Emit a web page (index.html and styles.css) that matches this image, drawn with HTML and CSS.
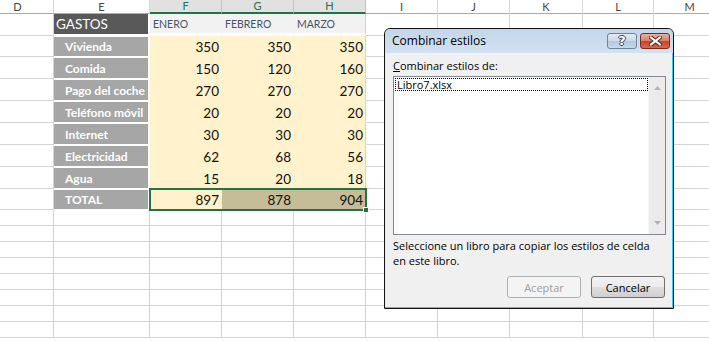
FILE: index.html
```html
<!DOCTYPE html>
<html lang="es">
<head>
<meta charset="utf-8">
<title>Combinar estilos</title>
<link rel="stylesheet" href="styles.css">
</head>
<body>
<div class="sheet">
  <div class="h">D</div><div class="h">E</div><div class="h sel">F</div><div class="h sel">G</div><div class="h sel">H</div><div class="h">I</div><div class="h">J</div><div class="h">K</div><div class="h">L</div><div class="h">M</div>

  <div class="c"></div><div class="c gastos">GASTOS</div><div class="c mon">ENERO</div><div class="c mon">FEBRERO</div><div class="c mon end">MARZO</div><div class="c"></div><div class="c"></div><div class="c"></div><div class="c"></div><div class="c"></div>

  <div class="c"></div><div class="c lbl">Vivienda</div><div class="c y">350</div><div class="c y">350</div><div class="c y end">350</div><div class="c"></div><div class="c"></div><div class="c"></div><div class="c"></div><div class="c"></div>
  <div class="c"></div><div class="c lbl">Comida</div><div class="c y">150</div><div class="c y">120</div><div class="c y end">160</div><div class="c"></div><div class="c"></div><div class="c"></div><div class="c"></div><div class="c"></div>
  <div class="c"></div><div class="c lbl">Pago del coche</div><div class="c y">270</div><div class="c y">270</div><div class="c y end">270</div><div class="c"></div><div class="c"></div><div class="c"></div><div class="c"></div><div class="c"></div>
  <div class="c"></div><div class="c lbl">Teléfono móvil</div><div class="c y">20</div><div class="c y">20</div><div class="c y end">20</div><div class="c"></div><div class="c"></div><div class="c"></div><div class="c"></div><div class="c"></div>
  <div class="c"></div><div class="c lbl">Internet</div><div class="c y">30</div><div class="c y">30</div><div class="c y end">30</div><div class="c"></div><div class="c"></div><div class="c"></div><div class="c"></div><div class="c"></div>
  <div class="c"></div><div class="c lbl">Electricidad</div><div class="c y">62</div><div class="c y">68</div><div class="c y end">56</div><div class="c"></div><div class="c"></div><div class="c"></div><div class="c"></div><div class="c"></div>
  <div class="c"></div><div class="c lbl">Agua</div><div class="c y">15</div><div class="c y">20</div><div class="c y end">18</div><div class="c"></div><div class="c"></div><div class="c"></div><div class="c"></div><div class="c"></div>
  <div class="c"></div><div class="c lbl">TOTAL</div><div class="c y tot-f">897</div><div class="c y tan tot-g">878</div><div class="c y tan end tot-h">904</div><div class="c"></div><div class="c"></div><div class="c"></div><div class="c"></div><div class="c"></div>

  <div class="c"></div><div class="c"></div><div class="c"></div><div class="c"></div><div class="c"></div><div class="c"></div><div class="c"></div><div class="c"></div><div class="c"></div><div class="c"></div>
  <div class="c"></div><div class="c"></div><div class="c"></div><div class="c"></div><div class="c"></div><div class="c"></div><div class="c"></div><div class="c"></div><div class="c"></div><div class="c"></div>
  <div class="c"></div><div class="c"></div><div class="c"></div><div class="c"></div><div class="c"></div><div class="c"></div><div class="c"></div><div class="c"></div><div class="c"></div><div class="c"></div>
  <div class="c"></div><div class="c"></div><div class="c"></div><div class="c"></div><div class="c"></div><div class="c"></div><div class="c"></div><div class="c"></div><div class="c"></div><div class="c"></div>
  <div class="c"></div><div class="c"></div><div class="c"></div><div class="c"></div><div class="c"></div><div class="c"></div><div class="c"></div><div class="c"></div><div class="c"></div><div class="c"></div>
  <div class="c"></div><div class="c"></div><div class="c"></div><div class="c"></div><div class="c"></div><div class="c"></div><div class="c"></div><div class="c"></div><div class="c"></div><div class="c"></div>
  <div class="c"></div><div class="c"></div><div class="c"></div><div class="c"></div><div class="c"></div><div class="c"></div><div class="c"></div><div class="c"></div><div class="c"></div><div class="c"></div>
  <div class="c"></div><div class="c"></div><div class="c"></div><div class="c"></div><div class="c"></div><div class="c"></div><div class="c"></div><div class="c"></div><div class="c"></div><div class="c"></div>

  <div class="selbox"><span class="handle"></span></div>
</div>

<div class="dlg">
  <div class="tbar">
    <span class="title">Combinar estilos</span>
    <div class="tbtns">
      <div class="tb help">?</div>
      <div class="tb close">
        <svg width="13" height="10" viewBox="0 0 13 10"><path d="M2 1.5 L11 8.5 M11 1.5 L2 8.5" stroke="#5a1e14" stroke-width="4" stroke-linecap="square"/><path d="M2 1.5 L11 8.5 M11 1.5 L2 8.5" stroke="#fff" stroke-width="2.2" stroke-linecap="square"/></svg>
      </div>
    </div>
  </div>
  <div class="dbody">
    <div class="lab"><u>C</u>ombinar estilos de:</div>
    <div class="list">
      <div class="items"><div class="item">Libro7.xlsx</div></div>
      <div class="sbar">
        <svg width="7" height="4" viewBox="0 0 7 4"><path d="M0 4 L3.5 0 L7 4Z" fill="#b4b4b4"/></svg>
        <svg width="7" height="4" viewBox="0 0 7 4"><path d="M0 0 L3.5 4 L7 0Z" fill="#b4b4b4"/></svg>
      </div>
    </div>
    <p class="desc">Seleccione un libro para copiar los estilos de celda<br>en este libro.</p>
    <div class="btns">
      <button class="btn" disabled>Aceptar</button>
      <button class="btn">Cancelar</button>
    </div>
  </div>
</div>
</body>
</html>
```

FILE: styles.css
```css
* { box-sizing: border-box; }
html, body { margin: 0; padding: 0; background: #fff; overflow: hidden; }
body { width: 709px; height: 341px; position: relative; font-family: Lato, "Liberation Sans", sans-serif; }

.sheet {
  display: grid;
  margin-left: -18px;
  width: 744px;
  grid-template-columns: 72px 96px 72px 72px 72px 72px 72px 73px 71px 72px;
  grid-template-rows: 14px 22px 21px 22px 22px 22px 22px 22px 22px 21px repeat(8, 16px);
}

.c {
  border-right: 1px solid #d4d4d4;
  border-bottom: 1px solid #d4d4d4;
  white-space: nowrap;
  overflow: hidden;
  display: flex;
  align-items: center;
  min-width: 0;
}

.h {
  border-right: 1px solid #d8d8d8;
  border-bottom: 1px solid #ababab;
  background: #fff;
  color: #444;
  font-size: 11px;
  line-height: 12px;
  display: flex;
  align-items: center;
  justify-content: center;
}
.h.sel {
  background: #e1e1e1;
  color: #217346;
  border-right-color: #c2c2c2;
  border-bottom: 2px solid #217346;
}

.gastos {
  background: #595959;
  color: #fff;
  font-size: 13.5px;
  padding-left: 2px;
  border-right: 2px solid #fff;
  border-bottom: 2px solid #fff;
}

.mon {
  background: #f2f2f2;
  color: #44546a;
  font-size: 10.5px;
  padding-left: 3px;
  border-right-color: #f2f2f2;
  border-bottom: 3px solid #fff;
}
.mon.end { border-right-color: #d4d4d4; }

.lbl {
  background: #a6a6a6;
  color: #fff;
  font-weight: 700;
  font-size: 12px;
  padding-left: 11px;
  border-top: 1px solid #fff;
  border-right: 2px solid #fff;
  border-bottom: 1px solid #fff;
}

.y {
  background: #fff2cc;
  border-right-color: #fff2cc;
  border-bottom-color: #fff2cc;
  justify-content: flex-end;
  align-items: flex-end;
  padding-right: 2px;
  padding-bottom: 2px;
  font-size: 13.5px;
  line-height: 14px;
  color: #111;
}
.y.end { border-right-color: #d4d4d4; }
.y.tan { background: #c4bd97; border-right-color: #c4bd97; }
.y.tan.end { border-right-color: #d4d4d4; }

.tot-f { grid-row: 10; grid-column: 3; }
.tot-g { grid-row: 10; grid-column: 4; }
.tot-h { grid-row: 10; grid-column: 5; }

.selbox {
  grid-column: 3 / 6;
  grid-row: 10;
  margin: -1px;
  border: 2px solid #217346;
  position: relative;
  z-index: 2;
}
.handle {
  position: absolute;
  right: -4px;
  bottom: -4px;
  width: 6px;
  height: 6px;
  background: #217346;
  border: 1px solid #fff;
}

/* Dialog */
.dlg {
  position: absolute;
  left: 384px;
  top: 28px;
  width: 290px;
  height: 281px;
  border: 1px solid #141414;
  border-radius: 6px 6px 0 0;
  background: #f0f0f0;
  display: flex;
  flex-direction: column;
  font-family: "Open Sans", "Noto Sans", sans-serif;
  font-size: 11px;
  color: #000;
  box-shadow: inset -1px -1px 0 #3cc6f2, inset 1px 0 0 #e3eaf4;
  overflow: hidden;
  z-index: 5;
}
.tbar {
  height: 24px;
  flex: none;
  display: flex;
  justify-content: space-between;
  align-items: flex-start;
  padding: 0 3px 0 7px;
  background: linear-gradient(#c3d5ea, #d3e2f2);
  border-radius: 5px 5px 0 0;
}
.title {
  font-size: 12px;
  line-height: 24px;
  color: #000;
}
.tbtns {
  display: flex;
  gap: 3px;
  margin-top: 4px;
}
.tb {
  width: 30px;
  height: 16px;
  border-radius: 3px;
  display: flex;
  align-items: center;
  justify-content: center;
}
.help {
  border: 1px solid #6f8298;
  background: linear-gradient(#e4ecf5 0%, #cad8e8 48%, #b5c7dc 52%, #c9d8ea 100%);
  color: #fff;
  font-family: "DejaVu Sans", sans-serif;
  font-weight: 700;
  font-size: 13px;
  line-height: 14px;
  text-shadow: 1px 0 0 #3a4657, -1px 0 0 #3a4657, 0 1px 0 #3a4657, 0 -1px 0 #3a4657;
}
.close {
  border: 1px solid #7a2c1f;
  background: linear-gradient(#eab0a0 0%, #d98169 48%, #c5452b 52%, #d7684c 100%);
}

.dbody {
  flex: 1;
  display: flex;
  flex-direction: column;
  padding: 6px 7px 0 8px;
}
.lab {
  line-height: 14px;
}
.list {
  margin-top: 3px;
  height: 159px;
  border: 1px solid #828790;
  background: #fff;
  display: flex;
}
.items {
  flex: 1;
  padding: 1px 0 0 1px;
}
.item {
  border: 1px dotted #000;
  height: 13px;
  line-height: 11px;
  padding-left: 1px;
}
.sbar {
  width: 17px;
  background: #ebebeb;
  border-left: 1px solid #f6f6f6;
  display: flex;
  flex-direction: column;
  justify-content: space-between;
  align-items: center;
  padding: 9px 0 9px 1px;
}
.desc {
  margin: 3px 0 0;
  line-height: 15px;
}
.btns {
  margin-top: 8px;
  display: flex;
  justify-content: flex-end;
  gap: 10px;
  padding-right: 1px;
}
.btn {
  width: 74px;
  height: 22px;
  border-radius: 3px;
  font-family: "Open Sans", "Noto Sans", sans-serif;
  font-size: 11px;
  color: #000;
  padding: 0;
  border: 1px solid #707070;
  background: linear-gradient(#f2f2f2 0%, #ebebeb 48%, #dddddd 52%, #cfcfcf 100%);
}
.btn:disabled {
  border-color: #adb2b5;
  background: #f4f4f4;
  color: #9e9e9e;
}
```
